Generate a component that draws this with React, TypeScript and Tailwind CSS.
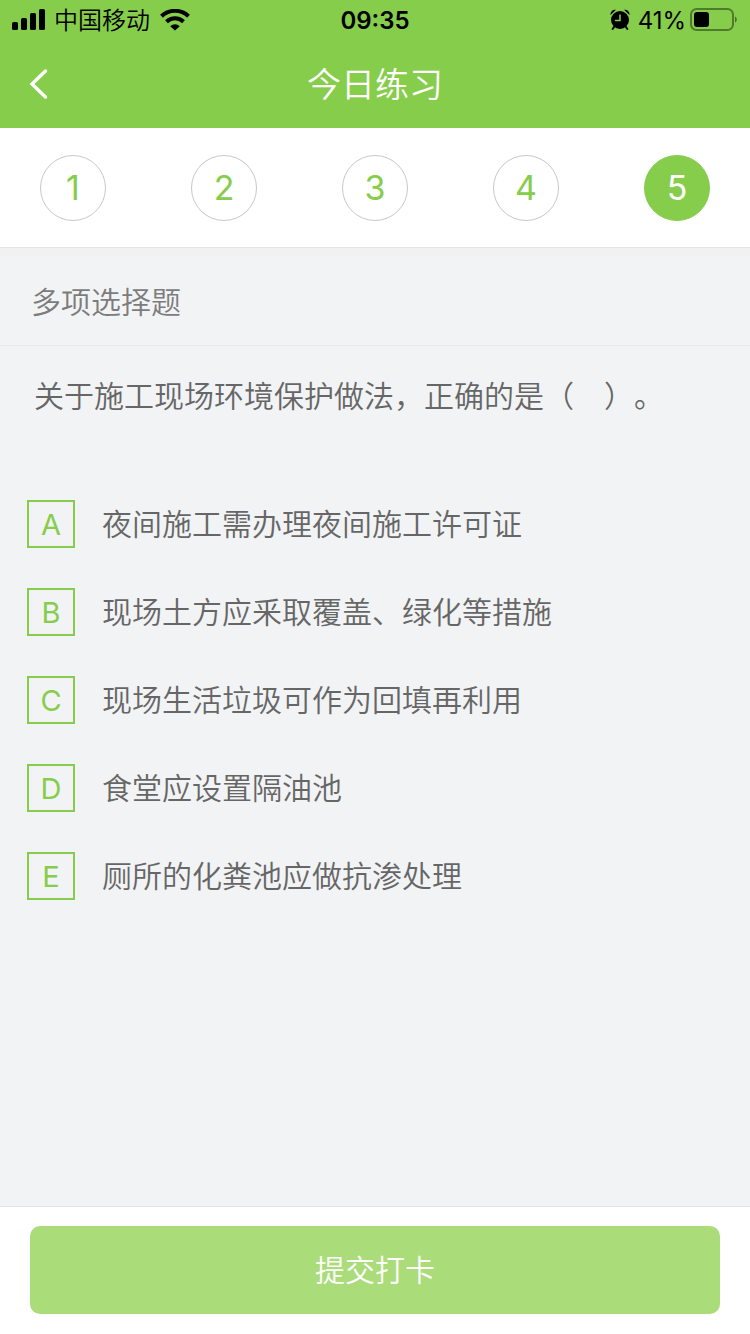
import React, { useState } from "react";

interface Option {
  key: string;
  text: string;
}

const steps = [1, 2, 3, 4, 5];

const options: Option[] = [
  { key: "A", text: "夜间施工需办理夜间施工许可证" },
  { key: "B", text: "现场土方应釆取覆盖、绿化等措施" },
  { key: "C", text: "现场生活垃圾可作为回填再利用" },
  { key: "D", text: "食堂应设置隔油池" },
  { key: "E", text: "厕所的化粪池应做抗渗处理" },
];

const SignalIcon = () => (
  <svg width="34" height="22" viewBox="0 0 34 22" aria-hidden="true">
    <rect x="0" y="13" width="6" height="8" rx="1.6" />
    <rect x="9" y="9" width="6" height="12" rx="1.6" />
    <rect x="18" y="4" width="6" height="17" rx="1.6" />
    <rect x="27" y="0" width="6" height="21" rx="1.6" />
  </svg>
);

const WifiIcon = () => (
  <svg width="30" height="22" viewBox="0 0 30 22" aria-hidden="true">
    <g fill="none" stroke="#000" strokeWidth="4">
      <path d="M1.5 7.2A19.6 19.6 0 0 1 28.5 7.2" />
      <path d="M6.5 12.7A12.2 12.2 0 0 1 23.5 12.7" />
    </g>
    <path d="M15 21.5L10.2 17.2A7.2 7.2 0 0 1 19.8 17.2Z" />
  </svg>
);

const AlarmIcon = () => (
  <svg width="20" height="22" viewBox="0 0 20 22" aria-hidden="true">
    <circle cx="10" cy="11" r="9" />
    <path d="M0.6 6A4.4 4.4 0 0 1 6 0.8ZM19.4 6A4.4 4.4 0 0 0 14 0.8Z" />
    <path
      d="M4.4 17.5L2.6 20M15.6 17.5L17.4 20"
      fill="none"
      stroke="#000"
      strokeWidth="2"
      strokeLinecap="round"
    />
    <path d="M10 5.4V11.4H5" fill="none" stroke="#86cd4b" strokeWidth="1.5" />
  </svg>
);

const BatteryIcon = () => (
  <svg width="48" height="24" viewBox="0 0 48 24" aria-hidden="true">
    <rect
      x="1"
      y="1"
      width="42"
      height="21"
      rx="5.5"
      fill="none"
      stroke="#000"
      strokeOpacity="0.4"
      strokeWidth="2"
    />
    <rect x="4" y="4" width="15" height="15" rx="3" />
    <path d="M45 8.5C47.4 9.5 47.4 13.5 45 14.5Z" fillOpacity="0.45" />
  </svg>
);

const StatusBar = () => (
  <div className="flex h-10 items-center px-3 text-2xl text-black">
    <div className="flex flex-1 items-center">
      <SignalIcon />
      <span className="mr-[10px] ml-2 pt-0.5 font-[350]">中国移动</span>
      <WifiIcon />
    </div>
    <time className="pt-0.5 font-[Inter] font-semibold">09:35</time>
    <div className="flex flex-1 items-center justify-end">
      <AlarmIcon />
      <span className="mr-1 ml-2 pt-0.5 font-[Inter]">41%</span>
      <BatteryIcon />
    </div>
  </div>
);

const App: React.FC = () => {
  const [current, setCurrent] = useState(5);
  const [selected, setSelected] = useState<string[]>([]);

  const toggle = (key: string) => {
    setSelected((prev) =>
      prev.includes(key) ? prev.filter((k) => k !== key) : [...prev, key]
    );
  };

  return (
    <div className="flex min-h-screen flex-col bg-[#f2f3f5] font-['Inter','Noto_Sans_CJK_SC',sans-serif]">
      <header className="bg-[#86cd4b]">
        <StatusBar />
        <div className="grid h-22 grid-cols-[80px_1fr_80px] items-center">
          <button type="button" aria-label="返回" className="flex h-full items-center pl-7">
            <svg width="20" height="32" viewBox="0 0 20 32" aria-hidden="true">
              <path
                d="M17.5 3L4 16L17.5 29"
                fill="none"
                stroke="#fff"
                strokeWidth="3.4"
                strokeLinecap="round"
              />
            </svg>
          </button>
          <h1 className="text-center text-[34px] font-[350] text-white">今日练习</h1>
        </div>
      </header>

      <nav className="flex justify-between border-b border-[#e4e4e4] bg-white px-10 pt-[27px] pb-[26px]">
        {steps.map((step) => (
          <button
            key={step}
            type="button"
            onClick={() => setCurrent(step)}
            className={`size-[66px] rounded-full border text-[34px] leading-[64px] ${
              step === current
                ? "border-[#86cd4b] bg-[#86cd4b] text-white"
                : "border-[#c8c8c8] text-[#86cd4b]"
            }`}
          >
            {step}
          </button>
        ))}
      </nav>

      <main className="flex-1 text-[30px] font-[350] text-[#666]">
        <h2 className="border-t-8 border-b border-t-[#f1f1f2] border-b-[#e8e9eb] px-[31px] pt-6 pb-5 leading-[45px] text-[#7c7c7c]">
          多项选择题
        </h2>
        <fieldset>
          <legend className="px-[34px] pt-7 leading-[45px] [text-spacing-trim:space-all]">
            关于施工现场环境保护做法，正确的是（&emsp;）。
          </legend>
          <div className="flex flex-col gap-10 px-[27px] pt-[81px]">
            {options.map((option) => (
              <label key={option.key} className="flex items-center gap-[27px]">
                <span className="grid size-12 shrink-0 place-items-center text-[#86cd4b] has-checked:text-white">
                  <input
                    type="checkbox"
                    checked={selected.includes(option.key)}
                    onChange={() => toggle(option.key)}
                    className="col-start-1 row-start-1 size-12 appearance-none border-2 border-[#86cd4b] checked:bg-[#86cd4b]"
                  />
                  <span className="pointer-events-none col-start-1 row-start-1 pt-0.5 text-[29px] font-normal">
                    {option.key}
                  </span>
                </span>
                <span className="leading-[45px]">{option.text}</span>
              </label>
            ))}
          </div>
        </fieldset>
      </main>

      <footer className="border-t border-[#e4e4e4] bg-white px-[30px] pt-[19px] pb-5">
        <button
          type="button"
          className="h-22 w-full rounded-[10px] bg-[#aadc7a] text-[30px] font-[350] text-white"
        >
          提交打卡
        </button>
      </footer>
    </div>
  );
};

export default App;
